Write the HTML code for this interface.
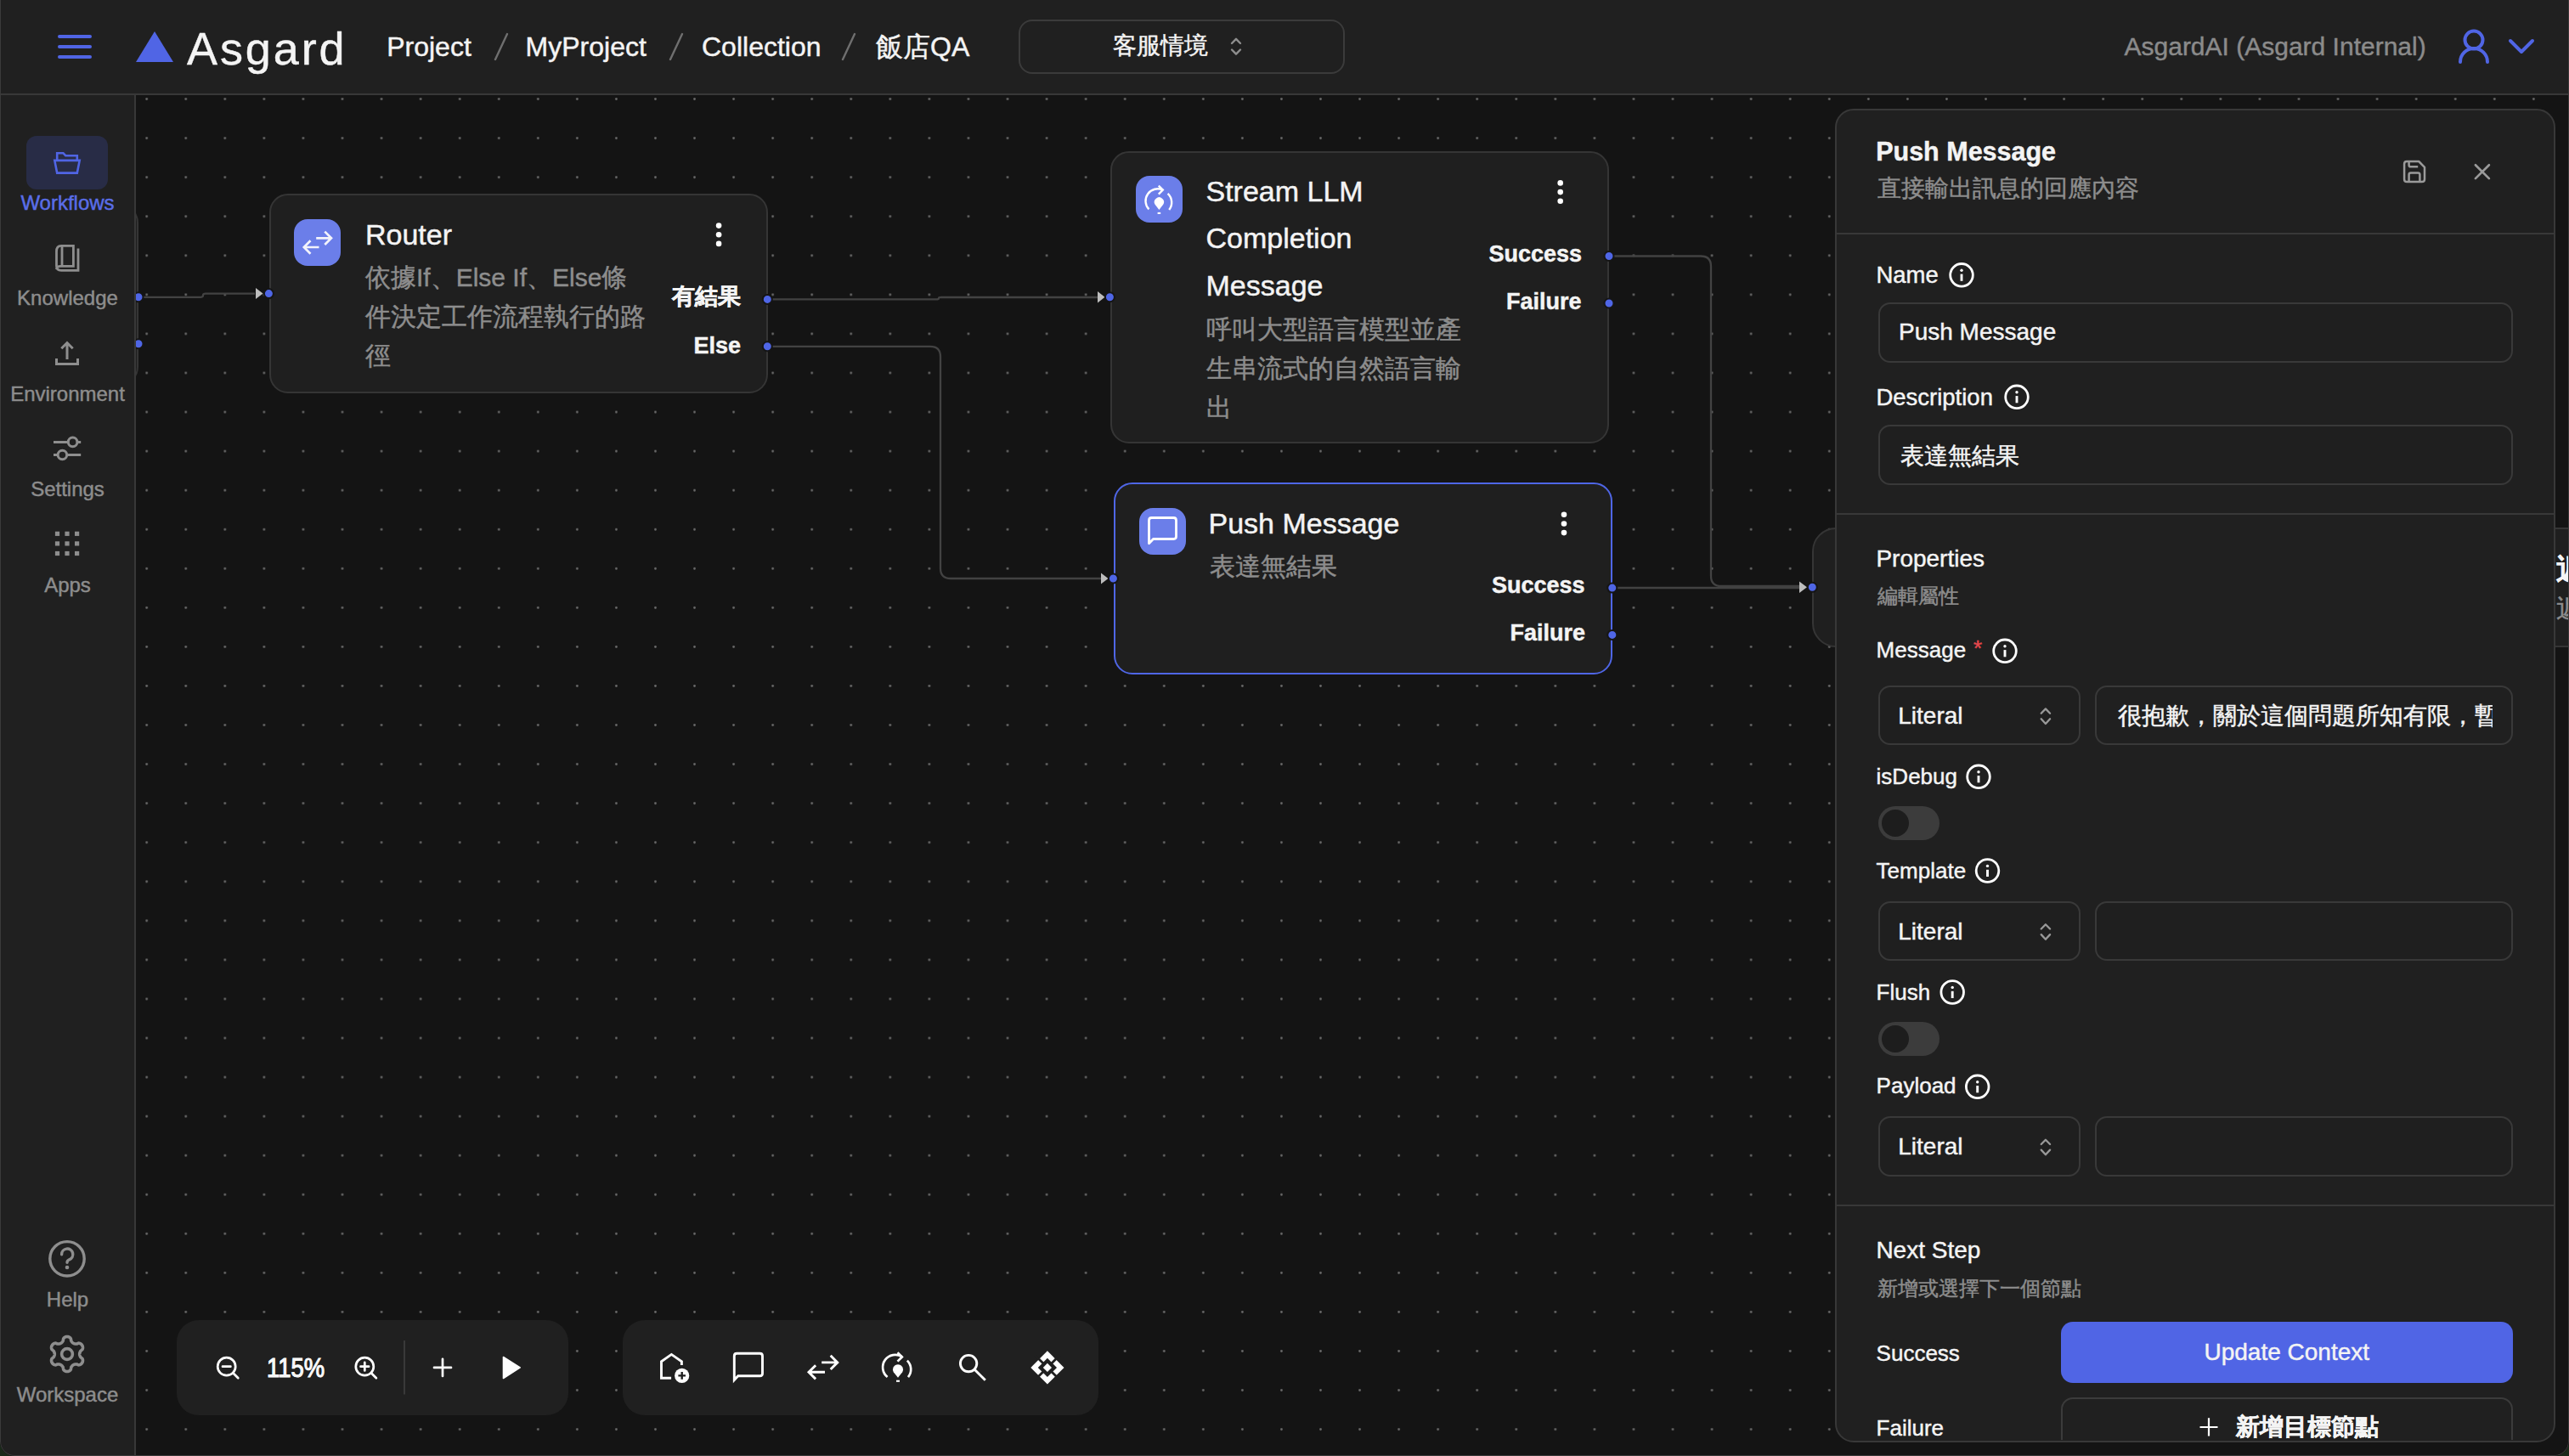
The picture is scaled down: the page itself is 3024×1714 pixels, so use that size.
<!DOCTYPE html>
<html><head><meta charset="utf-8">
<style>
*{box-sizing:border-box;margin:0;padding:0}
html,body{width:3024px;height:1714px;overflow:hidden;background:#1a2a1a}
body{font-family:"Liberation Sans",sans-serif;color:#f4f4f4;position:relative}
.abs{position:absolute}
.t{position:absolute;white-space:nowrap;line-height:1;-webkit-text-stroke:0.45px currentColor}
#win{position:absolute;left:0;top:0;width:3024px;height:1714px;background:#141414;border-radius:0 0 17px 17px;overflow:hidden}
#hdr{position:absolute;left:0;top:0;width:3024px;height:112px;background:#202020;border-bottom:2px solid #383838}
#side{position:absolute;left:0;top:112px;width:160px;height:1602px;background:#202020;border-right:2px solid #383838}
.node{position:absolute;background:#1f1f1f;border:2px solid #353535;border-radius:22px}
.icon{position:absolute;width:55px;height:55px;border-radius:16px;background:#6b7ee9}
.gray{color:#8d8d8d}
.lbl{font-size:26px}
.inp{position:absolute;border:2px solid #393939;border-radius:14px;background:#1f1f1f}
.tog{position:absolute;width:72px;height:40px;border-radius:20px;background:#3c3c3c}
.tog:after{content:"";position:absolute;left:4px;top:4px;width:32px;height:32px;border-radius:50%;background:#1d1d1d}
.bar{position:absolute;background:#202020;border-radius:26px}
</style></head><body>
<div id="win">
<!-- canvas dots + edges -->
<svg class="abs" style="left:0;top:0" width="3024" height="1714" viewBox="0 0 3024 1714">
<defs><pattern id="dots" x="149.67" y="93.57" width="46.06" height="46.06" patternUnits="userSpaceOnUse"><circle cx="23.03" cy="23.03" r="1.35" fill="#6a6a6a"/></pattern></defs>
<rect x="160" y="112" width="2864" height="1602" fill="url(#dots)"/>
<g fill="none" stroke="#424242" stroke-width="2.3">
<path d="M163 349.8 H236 q3 0 3 -2 v-0.2 q0 -2 3 -2 H300"/>
<path d="M903 352.4 H1102 q3 0 3 -1.2 q0 -1.2 3 -1.2 H1292"/>
<path d="M903 407.8 H1095 q12 0 12 12 V669 q0 12 12 12 H1296"/>
<path d="M1894 301.5 H2002 q12 0 12 12 V678 q0 12 12 12 H2118"/>
<path d="M1898 692 H2118"/>
</g>
<g fill="#bdbdbd">
<path d="M301 339 L309.5 345.6 L301 352 Z"/>
<path d="M1292 343 L1300.5 349.7 L1292 356.5 Z"/>
<path d="M1296 674.5 L1304.5 681 L1296 687.5 Z"/>
<path d="M2118 684.5 L2127 691.3 L2118 698 Z"/>
</g>
</svg>

<!-- hidden node behind sidebar -->
<div class="node" style="left:-300px;top:240px;width:462.5px;height:214px"></div>

<!-- Router node -->
<div class="node" style="left:317px;top:228px;width:587px;height:235px"></div>
<div class="icon" style="left:346px;top:258px"></div>
<div class="t" style="left:430px;top:259px;font-size:34px">Router</div>
<div class="t gray" style="left:430px;top:304px;font-size:30px;line-height:46px;white-space:normal;width:340px">依據If、Else If、Else條<br>件決定工作流程執行的路<br>徑</div>
<div class="t" style="left:791px;top:336.4px;font-size:27px;font-weight:700">有結果</div>
<div class="t" style="left:816.5px;top:393.6px;font-size:27px;font-weight:700">Else</div>

<!-- Stream LLM node -->
<div class="node" style="left:1307px;top:178px;width:587px;height:344px"></div>
<div class="icon" style="left:1337px;top:207px"></div>
<div class="t" style="left:1419.5px;top:197.5px;font-size:34px;line-height:55.5px">Stream LLM<br>Completion<br>Message</div>
<div class="t gray" style="left:1420px;top:365.3px;font-size:30px;line-height:46px">呼叫大型語言模型並產<br>生串流式的自然語言輸<br>出</div>
<div class="t" style="left:1752.5px;top:286.3px;font-size:27px;font-weight:700">Success</div>
<div class="t" style="left:1773px;top:341.6px;font-size:27px;font-weight:700">Failure</div>

<!-- Push Message node -->
<div class="node" style="left:1311px;top:568px;width:587px;height:226px;border-color:#4f66e6;border-width:2.5px"></div>
<div class="icon" style="left:1341px;top:598px"></div>
<div class="t" style="left:1422.5px;top:598.5px;font-size:34px">Push Message</div>
<div class="t gray" style="left:1424px;top:651.8px;font-size:30px">表達無結果</div>
<div class="t" style="left:1756px;top:676.2px;font-size:27px;font-weight:700">Success</div>
<div class="t" style="left:1777.5px;top:732.1px;font-size:27px;font-weight:700">Failure</div>

<!-- node behind panel -->
<div class="node" style="left:2133px;top:621px;width:1000px;height:141px;border-radius:28px"></div>
<div class="t" style="left:3009px;top:652.9px;font-size:34px;font-weight:700">返回</div>
<div class="t gray" style="left:3009px;top:702.3px;font-size:30px">返回</div>


<svg class="abs" style="left:0;top:0" width="2000" height="800">
<g fill="none" stroke="#f2f3fb" stroke-width="2.7" stroke-linecap="butt" stroke-linejoin="miter">
<path d="M372.2 280.3 H389.5 M382.3 272.6 L390 280.3 L382.3 288"/>
<path d="M375.5 291 H358.2 M365.5 283.3 L357.8 291 L365.5 298.7"/>
</g>
<g fill="none" stroke="#ffffff" stroke-width="2.4" stroke-linecap="butt">
<path d="M1352.4 246.4 A14.3 14.3 0 0 1 1368.8 223.6"/>
<path d="M1363.8 218.6 L1368.8 223.6 L1363.8 228.6"/>
<path d="M1374.6 227.8 A14.3 14.3 0 0 1 1376.2 247"/>
</g>
<g fill="#ffffff">
<path d="M1364.4 247 L1359.6 240.8 A5.6 5.6 0 1 1 1369.2 240.8 Z"/>
<rect x="1362.6" y="249.9" width="3.6" height="2.1"/>
</g>
<g fill="none" stroke="#ffffff" stroke-width="2.8" stroke-linejoin="round">
<path d="M1357.5 634.5 H1381.5 Q1384.5 634.5 1384.5 631.5 V612.5 Q1384.5 609.5 1381.5 609.5 H1355.5 Q1352.5 609.5 1352.5 612.5 V639.8 Z"/>
</g>
<g fill="#ffffff">
<circle cx="846.1" cy="265.6" r="3.3"/><circle cx="846.1" cy="276.3" r="3.3"/><circle cx="846.1" cy="286.9" r="3.3"/>
<circle cx="1836.7" cy="215.4" r="3.3"/><circle cx="1836.7" cy="226.1" r="3.3"/><circle cx="1836.7" cy="236.7" r="3.3"/>
<circle cx="1841" cy="605.8" r="3.3"/><circle cx="1841" cy="616.5" r="3.3"/><circle cx="1841" cy="627.1" r="3.3"/>
</g>
</svg>
<!-- handles -->
<svg class="abs" style="left:0;top:0" width="3024" height="1714">
<g fill="#4f66e6" stroke="#151515" stroke-width="2">
<circle cx="163" cy="349.8" r="5.5"/><circle cx="163" cy="404.8" r="5.5"/>
<circle cx="316.4" cy="345.6" r="5.5"/>
<circle cx="903.3" cy="352.4" r="5.5"/><circle cx="903.3" cy="407.8" r="5.5"/>
<circle cx="1306.4" cy="349.7" r="5.5"/>
<circle cx="1894" cy="301.5" r="5.5"/><circle cx="1894" cy="357" r="5.5"/>
<circle cx="1310.4" cy="681" r="5.5"/>
<circle cx="1897.8" cy="692.1" r="5.5"/><circle cx="1897.8" cy="747.4" r="5.5"/>
<circle cx="2133.3" cy="691.3" r="5.5"/>
</g>
</svg>

<!-- header -->
<div id="hdr"></div>
<svg class="abs" style="left:0;top:0" width="3024" height="112">
<g stroke="#5065e5" stroke-width="4" stroke-linecap="round"><path d="M70 43H106M70 55H106M70 67H106"/></g>
<path d="M160 73 L182 37 L204 73 Z" fill="#5065e5"/>
<g stroke="#6f6f6f" stroke-width="2.4" stroke-linecap="round"><path d="M583 70 L597 40M789 70 L803 40M992 70 L1006 40"/></g>
<g fill="none" stroke="#8e8e8e" stroke-width="2.4" stroke-linecap="round" stroke-linejoin="round"><path d="M1450 51 L1455 45.8 L1460 51M1450 58.5 L1455 63.7 L1460 58.5"/></g>
<g fill="none" stroke="#5065e5" stroke-width="4" stroke-linecap="round"><circle cx="2912" cy="47" r="10.5"/><path d="M2896 73 a16 16 0 0 1 32 0"/><path d="M2955 48 L2968 61 L2981 48" stroke-linejoin="round"/></g>
</svg>
<div class="t" style="left:220px;top:29.5px;font-size:54px;letter-spacing:2.9px">Asgard</div>
<div class="t" style="left:455.2px;top:39.3px;font-size:32px">Project</div>
<div class="t" style="left:618.6px;top:39.3px;font-size:32px">MyProject</div>
<div class="t" style="left:826px;top:39.3px;font-size:32px">Collection</div>
<div class="t" style="left:1031px;top:39.3px;font-size:32px">飯店QA</div>
<div class="abs" style="left:1199px;top:23px;width:384px;height:64px;border:2px solid #3b3b3b;border-radius:16px"></div>
<div class="t" style="left:1310px;top:40px;font-size:28px">客服情境</div>
<div class="t" style="left:2500.5px;top:39.6px;font-size:30px;color:#8b8b8b">AsgardAI (Asgard Internal)</div>
<!-- sidebar -->
<div id="side"></div>
<div class="abs" style="left:31px;top:160px;width:96px;height:63px;border-radius:12px;background:#282c46"></div>
<svg class="abs" style="left:0;top:0" width="160" height="1714">
<g fill="none" stroke="#5065e5" stroke-width="2.6" stroke-linejoin="miter">
<path d="M67.2 188.5 V180.2 H74.4 L77.2 183.2 H90.8 V188.5"/>
<path d="M64.3 188.9 H93.7 L90.8 203.6 H67.2 Z"/>
</g>
<g fill="none" stroke="#8e8e8e" stroke-width="2.8" stroke-linejoin="miter">
<path d="M66.5 296 Q66.5 289.4 72 289.4 H86.4 V313.4 H71.5 Q66.5 313.4 66.5 317 M66.5 296 V313 Q66.5 318.4 72 318.4 H92 V292.4"/>
<path d="M73 290 V313"/>
</g>
<g fill="none" stroke="#8e8e8e" stroke-width="3" stroke-linejoin="miter">
<path d="M79 423 V404.5 M72.3 410.2 L79 403.5 L85.7 410.2 M66.5 422 V428.5 H91.5 V422"/>
<path d="M63 520.4 H80.2 M91 520.4 H95.2 M63 535.5 H68 M78.7 535.5 H95.2"/>
<circle cx="85.6" cy="520.4" r="5.3"/><circle cx="73.4" cy="535.5" r="5.3"/>
</g>
<g fill="#8e8e8e">
<rect x="64.9" y="625.7" width="5.2" height="5.2"/><rect x="76.4" y="625.7" width="5.2" height="5.2"/><rect x="88" y="625.7" width="5.2" height="5.2"/>
<rect x="64.9" y="637.3" width="5.2" height="5.2"/><rect x="76.4" y="637.3" width="5.2" height="5.2"/><rect x="88" y="637.3" width="5.2" height="5.2"/>
<rect x="64.9" y="648.9" width="5.2" height="5.2"/><rect x="76.4" y="648.9" width="5.2" height="5.2"/><rect x="88" y="648.9" width="5.2" height="5.2"/>
</g>
<g fill="none" stroke="#8e8e8e" stroke-width="3.4" stroke-linecap="round">
<circle cx="79" cy="1481.8" r="20.2"/>
<path d="M72.6 1476.8 A6.6 6.6 0 1 1 81.6 1482.8 Q79 1484 79 1486.3"/>
</g>
<circle cx="79" cy="1492" r="2.3" fill="#8e8e8e"/>
<g fill="none" stroke="#8e8e8e" stroke-width="3.6" stroke-linejoin="round">
<path d="M93.70 1594.00 L93.71 1593.61 L93.76 1593.23 L93.83 1592.83 L93.94 1592.43 L94.07 1592.02 L94.24 1591.59 L94.46 1591.13 L94.73 1590.66 L95.10 1590.14 L96.00 1589.44 L96.88 1588.70 L97.18 1588.09 L97.36 1587.50 L97.45 1586.92 L97.47 1586.35 L97.44 1585.79 L97.34 1585.25 L97.20 1584.73 L97.00 1584.23 L96.75 1583.75 L96.46 1583.30 L96.13 1582.88 L95.75 1582.49 L95.33 1582.14 L94.86 1581.83 L94.36 1581.56 L93.81 1581.35 L93.21 1581.21 L92.52 1581.17 L91.45 1581.55 L90.40 1581.99 L89.76 1582.05 L89.21 1582.05 L88.71 1582.00 L88.26 1581.94 L87.83 1581.85 L87.43 1581.74 L87.05 1581.61 L86.69 1581.45 L86.35 1581.27 L86.02 1581.06 L85.71 1580.83 L85.41 1580.57 L85.11 1580.28 L84.82 1579.95 L84.53 1579.59 L84.25 1579.18 L83.97 1578.71 L83.70 1578.13 L83.56 1577.00 L83.35 1575.87 L82.98 1575.30 L82.55 1574.85 L82.09 1574.48 L81.61 1574.17 L81.11 1573.93 L80.59 1573.74 L80.07 1573.61 L79.54 1573.53 L79.00 1573.50 L78.46 1573.53 L77.93 1573.61 L77.41 1573.74 L76.89 1573.93 L76.39 1574.17 L75.91 1574.48 L75.45 1574.85 L75.02 1575.30 L74.65 1575.87 L74.44 1577.00 L74.30 1578.13 L74.03 1578.71 L73.75 1579.18 L73.47 1579.59 L73.18 1579.95 L72.89 1580.28 L72.59 1580.57 L72.29 1580.83 L71.98 1581.06 L71.65 1581.27 L71.31 1581.45 L70.95 1581.61 L70.57 1581.74 L70.17 1581.85 L69.74 1581.94 L69.29 1582.00 L68.79 1582.05 L68.24 1582.05 L67.60 1581.99 L66.55 1581.55 L65.48 1581.17 L64.79 1581.21 L64.19 1581.35 L63.64 1581.56 L63.14 1581.83 L62.67 1582.14 L62.25 1582.49 L61.87 1582.88 L61.54 1583.30 L61.25 1583.75 L61.00 1584.23 L60.80 1584.73 L60.66 1585.25 L60.56 1585.79 L60.53 1586.35 L60.55 1586.92 L60.64 1587.50 L60.82 1588.09 L61.12 1588.70 L62.00 1589.44 L62.90 1590.14 L63.27 1590.66 L63.54 1591.13 L63.76 1591.59 L63.93 1592.02 L64.06 1592.43 L64.17 1592.83 L64.24 1593.23 L64.29 1593.61 L64.30 1594.00 L64.29 1594.39 L64.24 1594.77 L64.17 1595.17 L64.06 1595.57 L63.93 1595.98 L63.76 1596.41 L63.54 1596.87 L63.27 1597.34 L62.90 1597.86 L62.00 1598.56 L61.12 1599.30 L60.82 1599.91 L60.64 1600.50 L60.55 1601.08 L60.53 1601.65 L60.56 1602.21 L60.66 1602.75 L60.80 1603.27 L61.00 1603.77 L61.25 1604.25 L61.54 1604.70 L61.87 1605.12 L62.25 1605.51 L62.67 1605.86 L63.14 1606.17 L63.64 1606.44 L64.19 1606.65 L64.79 1606.79 L65.48 1606.83 L66.55 1606.45 L67.60 1606.01 L68.24 1605.95 L68.79 1605.95 L69.29 1606.00 L69.74 1606.06 L70.17 1606.15 L70.57 1606.26 L70.95 1606.39 L71.31 1606.55 L71.65 1606.73 L71.98 1606.94 L72.29 1607.17 L72.59 1607.43 L72.89 1607.72 L73.18 1608.05 L73.47 1608.41 L73.75 1608.82 L74.03 1609.29 L74.30 1609.87 L74.44 1611.00 L74.65 1612.13 L75.02 1612.70 L75.45 1613.15 L75.91 1613.52 L76.39 1613.83 L76.89 1614.07 L77.41 1614.26 L77.93 1614.39 L78.46 1614.47 L79.00 1614.50 L79.54 1614.47 L80.07 1614.39 L80.59 1614.26 L81.11 1614.07 L81.61 1613.83 L82.09 1613.52 L82.55 1613.15 L82.98 1612.70 L83.35 1612.13 L83.56 1611.00 L83.70 1609.87 L83.97 1609.29 L84.25 1608.82 L84.53 1608.41 L84.82 1608.05 L85.11 1607.72 L85.41 1607.43 L85.71 1607.17 L86.02 1606.94 L86.35 1606.73 L86.69 1606.55 L87.05 1606.39 L87.43 1606.26 L87.83 1606.15 L88.26 1606.06 L88.71 1606.00 L89.21 1605.95 L89.76 1605.95 L90.40 1606.01 L91.45 1606.45 L92.52 1606.83 L93.21 1606.79 L93.81 1606.65 L94.36 1606.44 L94.86 1606.17 L95.33 1605.86 L95.75 1605.51 L96.13 1605.12 L96.46 1604.70 L96.75 1604.25 L97.00 1603.77 L97.20 1603.27 L97.34 1602.75 L97.44 1602.21 L97.47 1601.65 L97.45 1601.08 L97.36 1600.50 L97.18 1599.91 L96.88 1599.30 L96.00 1598.56 L95.10 1597.86 L94.73 1597.34 L94.46 1596.87 L94.24 1596.41 L94.07 1595.98 L93.94 1595.57 L93.83 1595.17 L93.76 1594.77 L93.71 1594.39 Z"/>
<circle cx="79" cy="1594" r="6.4"/>
</g>
</svg>
<div class="t" style="left:0;width:159px;text-align:center;top:226.5px;font-size:24px;color:#5a6ee8">Workflows</div>
<div class="t gray" style="left:0;width:159px;text-align:center;top:339px;font-size:24px">Knowledge</div>
<div class="t gray" style="left:0;width:159px;text-align:center;top:451.5px;font-size:24px">Environment</div>
<div class="t gray" style="left:0;width:159px;text-align:center;top:564px;font-size:24px">Settings</div>
<div class="t gray" style="left:0;width:159px;text-align:center;top:676.5px;font-size:24px">Apps</div>
<div class="t gray" style="left:0;width:159px;text-align:center;top:1517.7px;font-size:24px">Help</div>
<div class="t gray" style="left:0;width:159px;text-align:center;top:1630px;font-size:24px">Workspace</div>

<!-- bottom bars -->
<div class="bar" style="left:208px;top:1554px;width:461px;height:112px"></div>
<div class="bar" style="left:733px;top:1554px;width:560px;height:112px"></div>
<div class="t" style="left:313.5px;top:1594.5px;font-size:31px;-webkit-text-stroke:1.1px #fff;transform:scaleX(0.885);transform-origin:0 0">115%</div>
<svg class="abs" style="left:0;top:1500px" width="1400" height="200">
<g transform="translate(0,-1500)">
<g fill="none" stroke="#ffffff" stroke-width="2.7" stroke-linecap="round">
<circle cx="266.7" cy="1608.7" r="10.5"/><path d="M274.3 1616.3 L280.3 1622.3 M262 1608.7 H271.4"/>
<circle cx="429.3" cy="1608.7" r="10.5"/><path d="M436.9 1616.3 L442.9 1622.3 M424.5 1608.7 H434.1 M429.3 1603.9 V1613.5"/>
<path d="M511 1609.9 H531 M521 1599.8 V1620"/>
</g>
<path d="M476 1578 V1641.6" stroke="#393939" stroke-width="2"/>
<path d="M592.5 1597.5 L612.2 1609.9 L592.5 1622.5 Z" fill="#fff" stroke="#fff" stroke-width="1.6" stroke-linejoin="round"/>
<g fill="none" stroke="#ffffff" stroke-width="2.9" stroke-linejoin="miter">
<path d="M790.1 1622.3 H778.5 V1602.8 L790.4 1594.4 L802.4 1602.8 V1607"/>
<path d="M868.8 1619.7 H894.5 Q897.5 1619.7 897.5 1616.7 V1596.2 Q897.5 1593.2 894.5 1593.2 H867.3 Q864.3 1593.2 864.3 1596.2 V1624.5 Z"/>
<path d="M967.2 1603.9 H985.5 M977.7 1595.8 L985.8 1603.9 L977.7 1612"/>
<path d="M971 1615.3 H952.3 M960.1 1607.2 L952 1615.3 L960.1 1623.4"/>
<path d="M1044.6 1621 A14.7 14.7 0 0 1 1061.8 1597.2" stroke-width="2.7"/>
<path d="M1056.5 1592.2 L1061.8 1597.4 L1056.5 1602.6" stroke-width="2.7"/>
<path d="M1067.9 1601.6 A14.7 14.7 0 0 1 1069 1621.2" stroke-width="2.7"/>
<circle cx="1140.1" cy="1605.1" r="9.7"/><path d="M1147.2 1612.2 L1159.8 1624.8"/>
</g>
<circle cx="802.7" cy="1619.4" r="8.6" fill="#fff"/>
<path d="M798.4 1619.4 H807 M802.7 1615.1 V1623.7" stroke="#202020" stroke-width="2.4"/>
<path d="M1057 1621.7 L1051.8 1615.3 A6 6 0 1 1 1062.2 1615.3 Z" fill="#fff"/>
<rect x="1055" y="1624.7" width="4" height="2.1" fill="#fff"/>
<path d="M1232.9 1590.3 L1252.5 1609.9 L1232.9 1629.5 L1213.3 1609.9 Z" fill="#fff"/>
<path d="M1232.9 1598.8 L1244 1609.9 L1232.9 1621 L1221.8 1609.9 Z" fill="#202020"/>
<path d="M1218 1595 L1247.8 1624.8 M1247.8 1595 L1218 1624.8" stroke="#202020" stroke-width="2.8"/>
<path d="M1232.9 1604.8 L1238 1609.9 L1232.9 1615 L1227.8 1609.9 Z" fill="#fff"/>
</g>
</svg>

<!-- panel -->
<div class="abs" id="panel" style="left:2160px;top:128px;width:848px;height:1570px;background:#202020;border:2px solid #383838;border-radius:22px;overflow:hidden"></div>
<div class="abs" style="left:2162px;top:274px;width:844px;height:2px;background:#383838"></div>
<div class="abs" style="left:2162px;top:603.5px;width:844px;height:2px;background:#383838"></div>
<div class="abs" style="left:2162px;top:1417.5px;width:844px;height:2px;background:#383838"></div>
<div class="t" style="left:2208.2px;top:163px;font-size:30.5px;font-weight:700">Push Message</div>
<div class="t gray" style="left:2210px;top:208px;font-size:28px">直接輸出訊息的回應內容</div>
<div class="t" style="left:2208.4px;top:310.3px;font-size:27.5px">Name</div>
<div class="inp" style="left:2210.5px;top:356.4px;width:747.5px;height:71px"></div>
<div class="t" style="left:2235px;top:377px;font-size:28px">Push Message</div>
<div class="t" style="left:2208.4px;top:454.2px;font-size:27.5px">Description</div>
<div class="inp" style="left:2210.5px;top:500.2px;width:747.5px;height:71px"></div>
<div class="t" style="left:2237px;top:523.2px;font-size:28px">表達無結果</div>
<div class="t" style="left:2208.4px;top:643.7px;font-size:28px">Properties</div>
<div class="t gray" style="left:2210px;top:690.2px;font-size:24px">編輯屬性</div>
<div class="t" style="left:2208.6px;top:752.3px;font-size:26px">Message</div>
<div class="t" style="left:2323px;top:750px;font-size:26px;color:#e5484d">*</div>
<div class="inp" style="left:2210.5px;top:806.8px;width:238.5px;height:70.5px"></div>
<div class="t" style="left:2234.3px;top:828.5px;font-size:28px">Literal</div>
<div class="abs" style="left:2492.5px;top:820px;width:441px;height:46px;overflow:hidden"><div class="t" style="left:0;top:8.7px;font-size:28px">很抱歉，關於這個問題所知有限，暫時</div></div>
<div class="inp" style="left:2466.2px;top:806.8px;width:491.5px;height:70.5px;background:transparent"></div>
<div class="t" style="left:2208.6px;top:901px;font-size:26px">isDebug</div>
<div class="tog" style="left:2210.5px;top:949px"></div>
<div class="t" style="left:2208.6px;top:1011.7px;font-size:26px">Template</div>
<div class="inp" style="left:2210.5px;top:1061px;width:238.5px;height:70px"></div>
<div class="t" style="left:2234.3px;top:1082.5px;font-size:28px">Literal</div>
<div class="inp" style="left:2466.2px;top:1061px;width:491.5px;height:70px"></div>
<div class="t" style="left:2208.6px;top:1154.5px;font-size:26px">Flush</div>
<div class="tog" style="left:2210.5px;top:1203px"></div>
<div class="t" style="left:2208.6px;top:1265.3px;font-size:26px">Payload</div>
<div class="inp" style="left:2210.5px;top:1314.2px;width:238.5px;height:70.5px"></div>
<div class="t" style="left:2234.3px;top:1335.8px;font-size:28px">Literal</div>
<div class="inp" style="left:2466.2px;top:1314.2px;width:491.5px;height:70.5px"></div>
<div class="t" style="left:2208.4px;top:1457.8px;font-size:28px">Next Step</div>
<div class="t gray" style="left:2210px;top:1504.5px;font-size:24px">新增或選擇下一個節點</div>
<div class="t" style="left:2208.6px;top:1580px;font-size:26px">Success</div>
<div class="abs" style="left:2425.6px;top:1556.2px;width:532.4px;height:71.6px;background:#5065e5;border-radius:14px"></div>
<div class="t" style="left:2425.6px;width:532.4px;text-align:center;top:1578.3px;font-size:28px">Update Context</div>
<div class="t" style="left:2208.6px;top:1667.7px;font-size:26px">Failure</div>
<div class="abs" style="left:2162px;top:1640px;width:844px;height:55px;overflow:hidden">
<div class="abs" style="left:263.6px;top:5px;width:532.4px;height:80px;border:2px solid #3b3b3b;border-radius:14px"></div>
<div class="t" style="left:470px;top:25.7px;font-size:28px;font-weight:700">新增目標節點</div>
</div>
<svg class="abs" style="left:2160px;top:128px" width="848" height="1570">
<g transform="translate(-2160,-128)">
<g fill="none" stroke="#9a9a9a" stroke-width="2.5" stroke-linejoin="round">
<path d="M2833 190 H2847.2 L2854 196.8 V211 Q2854 214.1 2850.9 214.1 H2833.1 Q2830.1 214.1 2830.1 211 V193 Q2830.1 190 2833 190 Z"/>
<path d="M2835.6 190 V194.2 Q2835.6 196.3 2837.7 196.3 H2846.2 M2835.6 214.1 V205.6 Q2835.6 203.5 2837.7 203.5 H2846.3 Q2848.4 203.5 2848.4 205.6 V214.1"/>
</g>
<path d="M2913.9 194.2 L2929.9 210.1 M2929.9 194.2 L2913.9 210.1" stroke="#9a9a9a" stroke-width="2.7" stroke-linecap="round"/>
<circle cx="2309" cy="323.8" r="13.3" fill="none" stroke="#fff" stroke-width="2.8"/><circle cx="2309" cy="318.2" r="1.7" fill="#fff"/><path d="M2309 322.6 V330.8" stroke="#fff" stroke-width="2.9"/>
<circle cx="2374" cy="467.3" r="13.3" fill="none" stroke="#fff" stroke-width="2.8"/><circle cx="2374" cy="461.7" r="1.7" fill="#fff"/><path d="M2374 466.1 V474.3" stroke="#fff" stroke-width="2.9"/>
<circle cx="2360" cy="766.3" r="13.3" fill="none" stroke="#fff" stroke-width="2.8"/><circle cx="2360" cy="760.7" r="1.7" fill="#fff"/><path d="M2360 765.1 V773.3" stroke="#fff" stroke-width="2.9"/>
<circle cx="2329" cy="914.3" r="13.3" fill="none" stroke="#fff" stroke-width="2.8"/><circle cx="2329" cy="908.7" r="1.7" fill="#fff"/><path d="M2329 913.1 V921.3" stroke="#fff" stroke-width="2.9"/>
<circle cx="2339.5" cy="1025" r="13.3" fill="none" stroke="#fff" stroke-width="2.8"/><circle cx="2339.5" cy="1019.4" r="1.7" fill="#fff"/><path d="M2339.5 1023.8 V1032.0" stroke="#fff" stroke-width="2.9"/>
<circle cx="2298.2" cy="1168" r="13.3" fill="none" stroke="#fff" stroke-width="2.8"/><circle cx="2298.2" cy="1162.4" r="1.7" fill="#fff"/><path d="M2298.2 1166.8 V1175.0" stroke="#fff" stroke-width="2.9"/>
<circle cx="2327.7" cy="1279.3" r="13.3" fill="none" stroke="#fff" stroke-width="2.8"/><circle cx="2327.7" cy="1273.7" r="1.7" fill="#fff"/><path d="M2327.7 1278.1 V1286.3" stroke="#fff" stroke-width="2.9"/>
<path d="M2402.7 839.7 L2407.9 834.4 L2413.1 839.7 M2402.7 846.3 L2407.9 852.0 L2413.1 846.3" fill="none" stroke="#999" stroke-width="2.3" stroke-linecap="round" stroke-linejoin="round"/>
<path d="M2402.7 1093.5 L2407.9 1088.2 L2413.1 1093.5 M2402.7 1100.1 L2407.9 1105.8 L2413.1 1100.1" fill="none" stroke="#999" stroke-width="2.3" stroke-linecap="round" stroke-linejoin="round"/>
<path d="M2402.7 1347.0 L2407.9 1341.7 L2413.1 1347.0 M2402.7 1353.6 L2407.9 1359.3 L2413.1 1353.6" fill="none" stroke="#999" stroke-width="2.3" stroke-linecap="round" stroke-linejoin="round"/>
<path d="M2589.5 1680 H2610.5 M2600 1669.3 V1690.6" stroke="#fff" stroke-width="2.2"/>
</g>
</svg>


<div class="abs" style="left:0;top:0;width:3024px;height:1714px;border:1.5px solid #3a3a3a;border-top:0;border-radius:0 0 17px 17px;pointer-events:none"></div>
</div>
</body></html>
